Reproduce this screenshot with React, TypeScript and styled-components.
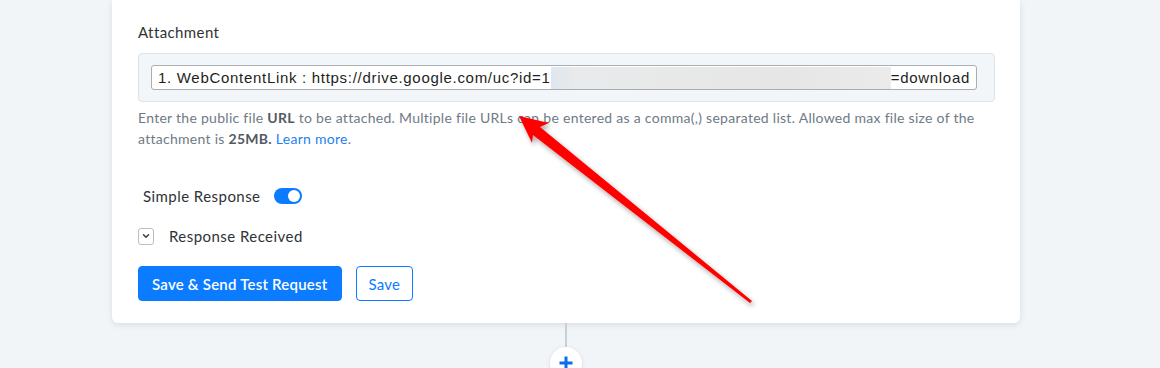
import styled, { createGlobalStyle } from "styled-components";

const GlobalStyles = createGlobalStyle`
  * {
    box-sizing: border-box;
  }
  body {
    margin: 0;
    background: #f2f5f8;
    font-family: "Lato", "Open Sans", sans-serif;
    color: #2f3337;
  }
`;

const Page = styled.div`
  position: relative;
  width: 1160px;
  height: 368px;
  overflow: hidden;
  padding-left: 112px;
  background: #f2f5f8;
`;

const Card = styled.div`
  width: 908px;
  background: #ffffff;
  border-radius: 0 0 6px 6px;
  box-shadow: 0 2px 6px rgba(40, 60, 90, 0.12);
  padding: 22px 25px 22px 26px;
`;

const Label = styled.div`
  font-size: 15px;
  line-height: 20px;
  letter-spacing: 0.4px;
  color: #2f3337;
  margin-bottom: 11px;
`;

const InputBox = styled.div`
  background: #f3f6f9;
  border: 1px solid #dce2e9;
  border-radius: 4px;
  padding: 11px 17px 11px 12px;
`;

const InputField = styled.div`
  height: 25px;
  background: #ffffff;
  border: 1px solid #a9aeb4;
  border-radius: 3px;
  padding: 0 6px;
  display: flex;
  align-items: center;
  font-family: "Liberation Sans", Arial, sans-serif;
  font-size: 15px;
  letter-spacing: 0.7px;
  color: #1d1f22;
  white-space: nowrap;
  overflow: hidden;
`;

const Redacted = styled.span`
  display: inline-block;
  width: 343px;
  height: 22px;
  margin-right: -5px;
  position: relative;
  z-index: 1;
  background: linear-gradient(90deg, #dfe7ef 0%, #e9eaeb 8%, #e6e6e6 70%, #ebebeb 100%);
`;

const Help = styled.p`
  margin: 5px 0 0;
  font-size: 14px;
  line-height: 21px;
  letter-spacing: 0.28px;
  color: #6f7a85;
  max-width: 850px;
`;

const Strong = styled.b`
  color: #535b63;
  font-weight: 700;
`;

const Link = styled.a`
  color: #1f7ff0;
  text-decoration: none;
`;

const Row = styled.div<{ $indent?: number; $top: number }>`
  display: flex;
  align-items: center;
  height: 20px;
  margin-top: ${({ $top }) => $top}px;
  padding-left: ${({ $indent }) => $indent ?? 0}px;
  font-size: 15px;
  letter-spacing: 0.45px;
  color: #2f3337;
  gap: 13px;
`;

const Toggle = styled.span`
  width: 28px;
  height: 16px;
  border-radius: 8px;
  background: #0b7bff;
  display: flex;
  align-items: center;
  justify-content: flex-end;
  padding-right: 2px;

  &::after {
    content: "";
    width: 12px;
    height: 12px;
    border-radius: 50%;
    background: #ffffff;
  }
`;

const ChevronBox = styled.span`
  width: 16px;
  height: 17px;
  border: 1px solid #b7bec6;
  border-radius: 3px;
  display: flex;
  align-items: center;
  justify-content: center;
  margin-right: 2px;
`;

const Actions = styled.div`
  display: flex;
  gap: 14px;
  margin-top: 20px;
`;

const Button = styled.button<{ $primary?: boolean }>`
  height: 35px;
  padding: 0 ${({ $primary }) => ($primary ? 13 : 12)}px;
  border-radius: 4px;
  border: 1px solid #0b7bff;
  background: ${({ $primary }) => ($primary ? "#0b7bff" : "#ffffff")};
  color: ${({ $primary }) => ($primary ? "#ffffff" : "#0b7bff")};
  font-family: "Lato", "Open Sans", sans-serif;
  font-size: 15px;
  letter-spacing: 0.22px;
  font-weight: ${({ $primary }) => ($primary ? 600 : 400)};
  cursor: pointer;
`;

const Connector = styled.div`
  width: 908px;
  display: flex;
  flex-direction: column;
  align-items: center;
`;

const Line = styled.div`
  width: 2px;
  height: 24px;
  background: #c9cfd7;
`;

const AddButton = styled.div`
  width: 32px;
  height: 32px;
  border-radius: 50%;
  background: #ffffff;
  box-shadow: 0 1px 4px rgba(40, 60, 90, 0.15);
  display: flex;
  align-items: center;
  justify-content: center;
`;

const Annotation = styled.svg`
  position: absolute;
  top: 0;
  left: 0;
  pointer-events: none;
`;

export default function App() {
  return (
    <>
      <GlobalStyles />
      <Page>
        <Card>
          <Label>Attachment</Label>
          <InputBox>
            <InputField>
              1. WebContentLink : https://drive.google.com/uc?id=1
              <Redacted />
              t=download
            </InputField>
          </InputBox>
          <Help>
            Enter the public file <Strong>URL</Strong> to be attached. Multiple
            file URLs can be entered as a comma(,) separated list. Allowed max
            file size of the attachment is <Strong>25MB.</Strong>{" "}
            <Link href="#">Learn more</Link>.
          </Help>

          <Row $top={37} $indent={5}>
            Simple Response
            <Toggle />
          </Row>

          <Row $top={20}>
            <ChevronBox>
              <svg width="10" height="10" viewBox="0 0 10 10" fill="none">
                <path
                  d="M2.5 3.8L5 6.3L7.5 3.8"
                  stroke="#3a3f45"
                  strokeWidth="1.5"
                  strokeLinecap="round"
                  strokeLinejoin="round"
                />
              </svg>
            </ChevronBox>
            Response Received
          </Row>

          <Actions>
            <Button $primary>Save &amp; Send Test Request</Button>
            <Button>Save</Button>
          </Actions>
        </Card>

        <Connector>
          <Line />
          <AddButton>
            <svg width="16" height="16" viewBox="0 0 16 16">
              <path
                d="M8 1.5V14.5M1.5 8H14.5"
                stroke="#0b6cf0"
                strokeWidth="3"
              />
            </svg>
          </AddButton>
        </Connector>

        <Annotation width="1160" height="368" viewBox="0 0 1160 368">
          <defs>
            <filter id="arrowShadow" x="-20%" y="-20%" width="140%" height="140%">
              <feDropShadow dx="2" dy="3" stdDeviation="2.5" floodColor="#000" floodOpacity="0.35" />
            </filter>
          </defs>
          <polygon
            points="519,116 549,123 540,127 752,301 750,303 533,135 532,143"
            fill="#ff0000"
            filter="url(#arrowShadow)"
          />
        </Annotation>
      </Page>
    </>
  );
}
